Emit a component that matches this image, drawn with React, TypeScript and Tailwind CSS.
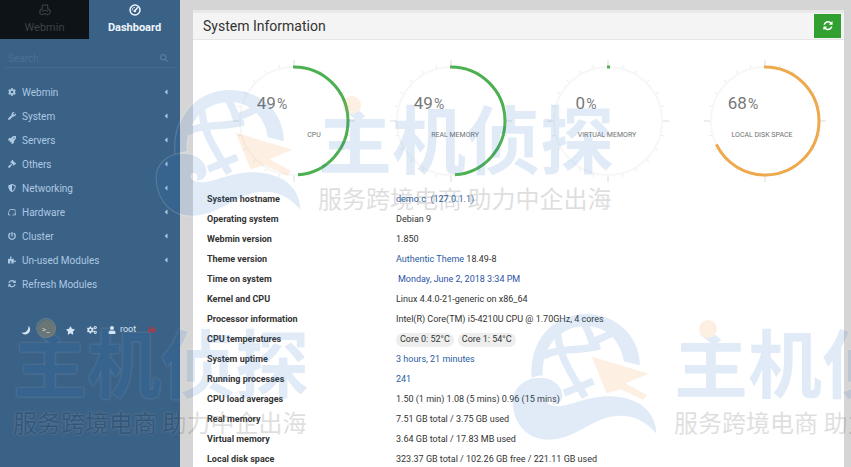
import type { ReactNode } from "react";
import {
  FaCog, FaWrench, FaRocket, FaGavel, FaShieldAlt,
  FaPowerOff, FaPuzzlePiece, FaCaretLeft,
  FaStar, FaCogs, FaUser, FaSignOutAlt,
} from "react-icons/fa";

const RefreshIcon = ({ className }: { className?: string }) => (
  <svg viewBox="0 0 1536 1664" fill="currentColor" className={className} aria-hidden="true">
    <path d="M1511 928q0 5-1 7-64 268-268 434.5t-478 166.5q-146 0-282.5-55t-243.5-157l-129 129q-19 19-45 19t-45-19-19-45v-448q0-26 19-45t45-19h448q26 0 45 19t19 45-19 45l-137 137q71 66 161 102t187 36q134 0 250-65t186-179q11-17 53-117 8-23 30-23h192q13 0 22.5 9.5t9.5 22.5zm25-800v448q0 26-19 45t-45 19h-448q-26 0-45-19t-19-45 19-45l138-138q-148-137-349-137-134 0-250 65t-186 179q-11 17-53 117-8 23-30 23h-199q-13 0-22.5-9.5t-9.5-22.5v-7q65-268 270-434.5t480-166.5q146 0 284 55.5t245 156.5l130-129q19-19 45-19t45 19 19 45z" />
  </svg>
);

const WebminIcon = () => (
  <svg viewBox="0 0 24 24" fill="none" stroke="currentColor" strokeWidth="2.2" className="h-3 w-3" aria-hidden="true">
    <path d="M6.500 10.500V4.500a2.700 2.700 0 0 1 5.500-.5a2.700 2.700 0 0 1 5.500.5v6" />
    <path d="M7 9.500C3 10.500 1.200 13 1.500 16.500c.5 3 3.500 5.500 6.500 5 2-.4 2.200-2.500 4-2.500s2 2.100 4 2.500c3 .5 6-2 6.500-5 .3-3.500-1.500-6-5.500-7" />
    <path d="M6 15.500c1.500-2.500 3.500-3 6-3s4.500.5 6 3" />
  </svg>
);

const DashboardIcon = () => (
  <svg viewBox="0 0 24 24" fill="none" stroke="currentColor" strokeWidth="3" className="h-3 w-3" aria-hidden="true">
    <circle cx="12" cy="12" r="10" />
    <path d="M11.500 14 17.500 6.500" strokeWidth="3" />
    <circle cx="11.500" cy="14" r="2.500" fill="currentColor" stroke="none" />
    <path d="M6 13A6 6 0 0 1 12 6.500" strokeWidth="1.500" />
  </svg>
);

const HardwareIcon = () => (
  <svg viewBox="0 0 16 16" fill="none" stroke="currentColor" strokeWidth="1.6" className="h-2 w-2" aria-hidden="true">
    <path d="M1 14V9L4 3H13.500L15 9V14H9" />
    <path d="M1 14H5M11 11.500H13" />
  </svg>
);

const MoonIcon = () => (
  <svg viewBox="0 0 16 16" fill="currentColor" className="h-2.5 w-2.5" aria-hidden="true">
    <path d="M12 1C17 6 14.500 14.500 7.500 15C4.500 15.200 2.200 14 1 12C7.500 13.500 12.500 8.500 12 1Z" />
  </svg>
);

const SearchIcon = () => (
  <svg viewBox="0 0 16 16" fill="none" stroke="currentColor" strokeWidth="2" className="mr-1 h-2 w-2 text-[#6389ad]" aria-hidden="true">
    <circle cx="6.500" cy="6.500" r="5.500" />
    <path d="M10.500 10.500 15.500 15.500" />
  </svg>
);

const menu = [
  { label: "Webmin", icon: <FaCog />, open: true },
  { label: "System", icon: <FaWrench />, open: true },
  { label: "Servers", icon: <FaRocket />, open: true },
  { label: "Others", icon: <FaGavel />, open: true },
  { label: "Networking", icon: <FaShieldAlt />, open: true },
  { label: "Hardware", icon: <HardwareIcon />, open: true },
  { label: "Cluster", icon: <FaPowerOff />, open: true },
  { label: "Un-used Modules", icon: <FaPuzzlePiece />, open: true },
  { label: "Refresh Modules", icon: <RefreshIcon className="h-2 w-2" />, open: false },
];

const gauges = [
  { label: "CPU", value: 49, labelX: 84, color: "#4caf50" },
  { label: "REAL MEMORY", value: 49, labelX: 68, color: "#4caf50" },
  { label: "VIRTUAL MEMORY", value: 0, labelX: 63, color: "#4caf50" },
  { label: "LOCAL DISK SPACE", value: 68, labelX: 61, color: "#eda94c" },
];

const link = "text-[#2a5d9f]";

const details: { label: string; value: ReactNode }[] = [
  { label: "System hostname", value: <a href="#host" className={link}>demo.c&nbsp; (127.0.1.1)</a> },
  { label: "Operating system", value: "Debian 9" },
  { label: "Webmin version", value: "1.850" },
  { label: "Theme version", value: <><a href="#theme" className={link}>Authentic Theme</a> 18.49-8</> },
  { label: "Time on system", value: <a href="#time" className="pl-0.5 text-[#2c52a8]">Monday, June 2, 2018 3:34 PM</a> },
  { label: "Kernel and CPU", value: "Linux 4.4.0-21-generic on x86_64" },
  { label: "Processor information", value: "Intel(R) Core(TM) i5-4210U CPU @ 1.70GHz, 4 cores" },
  {
    label: "CPU temperatures",
    value: (
      <span className="flex gap-1">
        <span className="rounded-full bg-[#eeeeee] px-1">Core 0: 52°C</span>
        <span className="rounded-full bg-[#eeeeee] px-1">Core 1: 54°C</span>
      </span>
    ),
  },
  { label: "System uptime", value: <a href="#uptime" className={link}>3 hours, 21 minutes</a> },
  { label: "Running processes", value: <a href="#proc" className={link}>241</a> },
  { label: "CPU load averages", value: "1.50 (1 min) 1.08 (5 mins) 0.96 (15 mins)" },
  { label: "Real memory", value: "7.51 GB total / 3.75 GB used" },
  { label: "Virtual memory", value: "3.64 GB total / 17.83 MB used" },
  { label: "Local disk space", value: "323.37 GB total / 102.26 GB free / 221.11 GB used" },
];

function Gauge({ label, value, labelX, color }: (typeof gauges)[number]) {
  const r = 54;
  const length = 2 * Math.PI * r;
  return (
    <svg viewBox="0 0 128 128" className="h-32 w-32 font-['Roboto',sans-serif]" role="img" aria-label={`${label} ${value}%`}>
      <circle cx="64" cy="64" r={r} fill="none" stroke="#f7f7f7" strokeWidth="2" />
      {Array.from({ length: 24 }, (_, i) => (
        <line
          key={i}
          x1="64"
          x2="64"
          y1={i % 6 === 0 ? 3 : 6}
          y2="9"
          stroke={i % 6 === 0 ? "#dcdcdc" : "#ececec"}
          transform={`rotate(${i * 15} 64 64)`}
        />
      ))}
      <circle
        cx="64"
        cy="64"
        r={r}
        fill="none"
        stroke={color}
        strokeWidth="3"
        strokeDasharray={`${Math.max(3, (length * value) / 100)} ${length}`}
        transform="rotate(-91 64 64)"
      />
      <text x="42" y="52" textAnchor="middle" fontSize="17" fill="#777777">
        {value}
        <tspan dx="1" fontSize="14">%</tspan>
      </text>
      <text x={labelX} y="80" textAnchor="middle" fontSize="7" fill="#707070">{label}</text>
    </svg>
  );
}

function Globe() {
  return (
    <svg viewBox="30 30 450 400" className="h-[133px] w-[150px] shrink-0" aria-hidden="true">
      <g stroke="#ffffff" strokeWidth="8" fill="#2b7bcb" paintOrder="stroke">
        <path d="M94 236C86 120 160 42 258 42C350 42 420 110 420 196L372 184C362 120 318 78 258 78C180 78 124 140 128 226C116 226 104 230 94 236Z" />
      </g>
      {/* meridians and parallels */}
      <g fill="none" stroke="#2b7bcb" strokeWidth="22">
        <path d="M172 84C174 170 212 218 256 292" />
        <path d="M244 60C266 88 276 112 280 150" />
        <path d="M130 168C180 142 230 156 300 138" />
        <path d="M268 128C300 118 334 102 362 84" />
        <path d="M192 280L280 244" />
      </g>
      <path
        d="M38 312C34 268 72 232 124 234C164 236 192 266 186 294C184 308 170 316 156 314C164 304 160 292 148 292C140 292 136 304 144 312C180 336 240 294 310 290C390 286 466 316 470 402C430 356 388 342 336 350C270 362 224 416 150 420C86 422 42 378 38 312Z"
        fill="#2b7bcb"
        stroke="#ffffff"
        strokeWidth="8"
        paintOrder="stroke"
      />
      <path d="M275 170L446 222L376 250L442 286L430 300L362 268L320 280Z" fill="#f7963a" stroke="#ffffff" strokeWidth="8" paintOrder="stroke" />
    </svg>
  );
}

function Watermark({ className }: { className: string }) {
  return (
    <div className={`absolute flex w-[464px] gap-3.5 opacity-14 ${className}`}>
      <Globe />
      <div className="relative pt-1 font-['Noto_Sans_CJK_SC',sans-serif] whitespace-nowrap [text-shadow:0_0_3px_white,0_0_2px_white]">
        <div className="text-[74px] leading-[92px] font-bold text-[#2b7bcb]">主机侦探</div>
        <div className="text-2xl leading-8 text-[#1c1c1c]">服务跨境电商 助力中企出海</div>
        <svg viewBox="0 0 300 92" className="absolute top-0 left-0 h-[92px] w-[300px]" aria-hidden="true">
          <circle cx="34" cy="19" r="9" fill="#f7963a" />
        </svg>
      </div>
    </div>
  );
}

export default function App() {
  return (
    <div className="relative flex h-screen overflow-hidden bg-[#d5d5d5] font-['Roboto',sans-serif] text-[9px] text-[#333333]">
      {/* Sidebar */}
      <aside className="flex w-[180px] shrink-0 flex-col bg-[#3a6186] text-[#aec8e2]">
        <div className="flex h-[39px] text-[11px] leading-4">
          <button className="flex w-[89px] flex-col items-center gap-1 bg-[#0e1318] pt-1 text-[#3c4246]">
            <WebminIcon />
            Webmin
          </button>
          <button className="flex flex-1 flex-col items-center gap-1 pt-1 font-bold text-[#eef6fd]">
            <DashboardIcon />
            Dashboard
          </button>
        </div>

        <label className="mx-1 mt-2 flex h-[21px] items-center border-b border-[#426a8f] px-1 pt-0.5">
          <input
            type="text"
            aria-label="Search"
            placeholder="Search"
            className="min-w-0 flex-1 bg-transparent text-[10px] outline-none placeholder:text-[#4a7197]"
          />
          <SearchIcon />
        </label>

        <nav className="mt-3 flex flex-col">
          {menu.map((m) => (
            <a key={m.label} href="#menu" className="flex h-6 items-center gap-1.5 px-2 text-[10px]">
              <span className="flex w-2 justify-center text-[8px]">{m.icon}</span>
              <span className="flex-1">{m.label}</span>
              {m.open && <FaCaretLeft className="mr-0.5 h-2 w-2" />}
            </a>
          ))}
        </nav>

        {/* Quick actions */}
        <div className="mt-[22px] ml-4 flex h-5 items-center text-[9px] text-[#d5e4f2]">
          <button aria-label="Night mode" className="flex w-5 justify-center pt-1">
            <MoonIcon />
          </button>
          <button
            aria-label="Terminal"
            className="flex h-5 w-5 items-center justify-center rounded-full border border-[#64808f] bg-[#53707f] pt-1 text-[8px] leading-none"
          >
            &gt;_
          </button>
          <button aria-label="Favorites" className="flex w-7 justify-center pt-1">
            <FaStar />
          </button>
          <button aria-label="Settings" className="flex w-4 justify-center pt-1">
            <FaCogs className="h-2.5 w-2.5" />
          </button>
          <button className="flex items-center gap-1 px-2 pt-1">
            <FaUser className="h-2 w-2" />
            root
          </button>
          <button aria-label="Log out" className="flex px-1 pt-1 text-[#b3383f]">
            <FaSignOutAlt className="h-2 w-2" />
          </button>
        </div>
      </aside>

      {/* System information panel */}
      <main className="mt-[10px] mr-[7px] ml-[13px] min-w-0 flex-1 bg-white">
        <header className="flex h-[30px] items-center justify-between border-t-[3px] border-b border-t-[#e8e8e8] border-b-[#e6e6e6] bg-[#f4f4f4] pr-[3px] pl-[10px]">
          <h1 className="text-sm">System Information</h1>
          <button aria-label="Refresh" className="flex h-6 w-[27px] items-center justify-center bg-[#31a031] text-white">
            <RefreshIcon className="h-2.5 w-2.5" />
          </button>
        </header>

        <section className="mt-[17px] grid grid-cols-4 justify-items-center pl-[22px]">
          {gauges.map((g) => (
            <Gauge key={g.label} {...g} />
          ))}
        </section>

        <table className="mt-[5px] w-full">
          <tbody>
            {details.map((d) => (
              <tr key={d.label} className="h-5">
                <th scope="row" className="w-[203px] p-0 pl-[14px] text-left font-bold">{d.label}</th>
                <td className="p-0">{d.value}</td>
              </tr>
            ))}
          </tbody>
        </table>
      </main>

      <div className="pointer-events-none absolute inset-0 overflow-hidden">
        <Watermark className="top-[86px] left-[154px]" />
        <Watermark className="top-[310px] left-[510px]" />
        <Watermark className="top-[310px] left-[-151px]" />
      </div>
    </div>
  );
}
